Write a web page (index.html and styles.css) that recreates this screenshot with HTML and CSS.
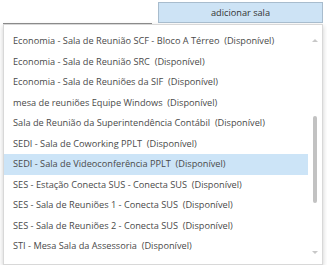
FILE: index.html
```html
<!DOCTYPE html>
<html lang="pt-BR">
<head>
    <meta charset="UTF-8">
    <title>Salas</title>
    <link rel="stylesheet" href="styles.css">
</head>
<body>
    <div class="toolbar">
        <div class="room-input"></div>
        <button class="add-room">adicionar sala</button>
    </div>
    <div class="room-dropdown">
        <ul class="room-list">
            <li>Economia - Sala de Reunião SCF - Bloco A Térreo&nbsp; (Disponível)</li>
            <li>Economia - Sala de Reunião SRC&nbsp; (Disponível)</li>
            <li>Economia - Sala de Reuniões da SIF&nbsp; (Disponível)</li>
            <li>mesa de reuniões Equipe Windows&nbsp; (Disponível)</li>
            <li>Sala de Reunião da Superintendência Contábil&nbsp; (Disponível)</li>
            <li>SEDI - Sala de Coworking PPLT&nbsp; (Disponível)</li>
            <li class="selected">SEDI - Sala de Videoconferência PPLT&nbsp; (Disponível)</li>
            <li>SES - Estação Conecta SUS - Conecta SUS&nbsp; (Disponível)</li>
            <li>SES - Sala de Reuniões 1 - Conecta SUS&nbsp; (Disponível)</li>
            <li>SES - Sala de Reuniões 2 - Conecta SUS&nbsp; (Disponível)</li>
            <li>STI - Mesa Sala da Assessoria&nbsp; (Disponível)</li>
        </ul>
        <div class="scrollbar">
            <span class="arrow up"></span>
            <div class="track"><div class="thumb"></div></div>
            <span class="arrow down"></span>
        </div>
    </div>
</body>
</html>
```

FILE: styles.css
```css
:root {
    --text-color: #4a4a4a;
    --selected-bg: #cce4f7;
    --button-bg: #cde3f5;
    --button-border: #a8bccd;
    --thumb-color: #c2c2c2;
    --arrow-color: #c8c8c8;
}

body {
    margin: 0;
    padding: 2px 4px 0 3px;
    background: white;
    font-family: "Open Sans", "Noto Sans", sans-serif;
    font-size: 9.2px;
    color: var(--text-color);
}

.toolbar {
    display: flex;
    align-items: flex-end;
    justify-content: space-between;
    height: 22px;
}

.room-input {
    width: 149px;
    height: 0;
    border-bottom: 1px solid #8a8a8a;
}

.add-room {
    width: 165px;
    height: 21px;
    margin: 0 0 1px 0;
    padding: 0;
    background: var(--button-bg);
    border: 1px solid var(--button-border);
    font-family: inherit;
    font-size: 9.2px;
    color: #333;
}

.room-dropdown {
    display: flex;
    width: 320px;
    height: 241px;
    box-sizing: border-box;
    background: white;
    border: 1px solid #d8d8d8;
    box-shadow: 0 2px 5px rgba(0, 0, 0, 0.2);
}

.room-list {
    flex: 1;
    margin: 0;
    padding: 6px 0 0 0;
    list-style: none;
}

.room-list li {
    height: 20.5px;
    line-height: 20.5px;
    padding-left: 9px;
    white-space: nowrap;
}

.room-list li.selected {
    background: var(--selected-bg);
}

.scrollbar {
    width: 14px;
    display: flex;
    flex-direction: column;
    align-items: center;
    padding: 14px 0 10px;
}

.track {
    flex: 1;
    width: 4px;
    padding-top: 74px;
}

.thumb {
    height: 87px;
    border-radius: 2px;
    background: var(--thumb-color);
}

.arrow {
    width: 0;
    height: 0;
    border-left: 3px solid transparent;
    border-right: 3px solid transparent;
}

.arrow.up {
    border-bottom: 3px solid var(--arrow-color);
}

.arrow.down {
    border-top: 3px solid var(--arrow-color);
}
```
